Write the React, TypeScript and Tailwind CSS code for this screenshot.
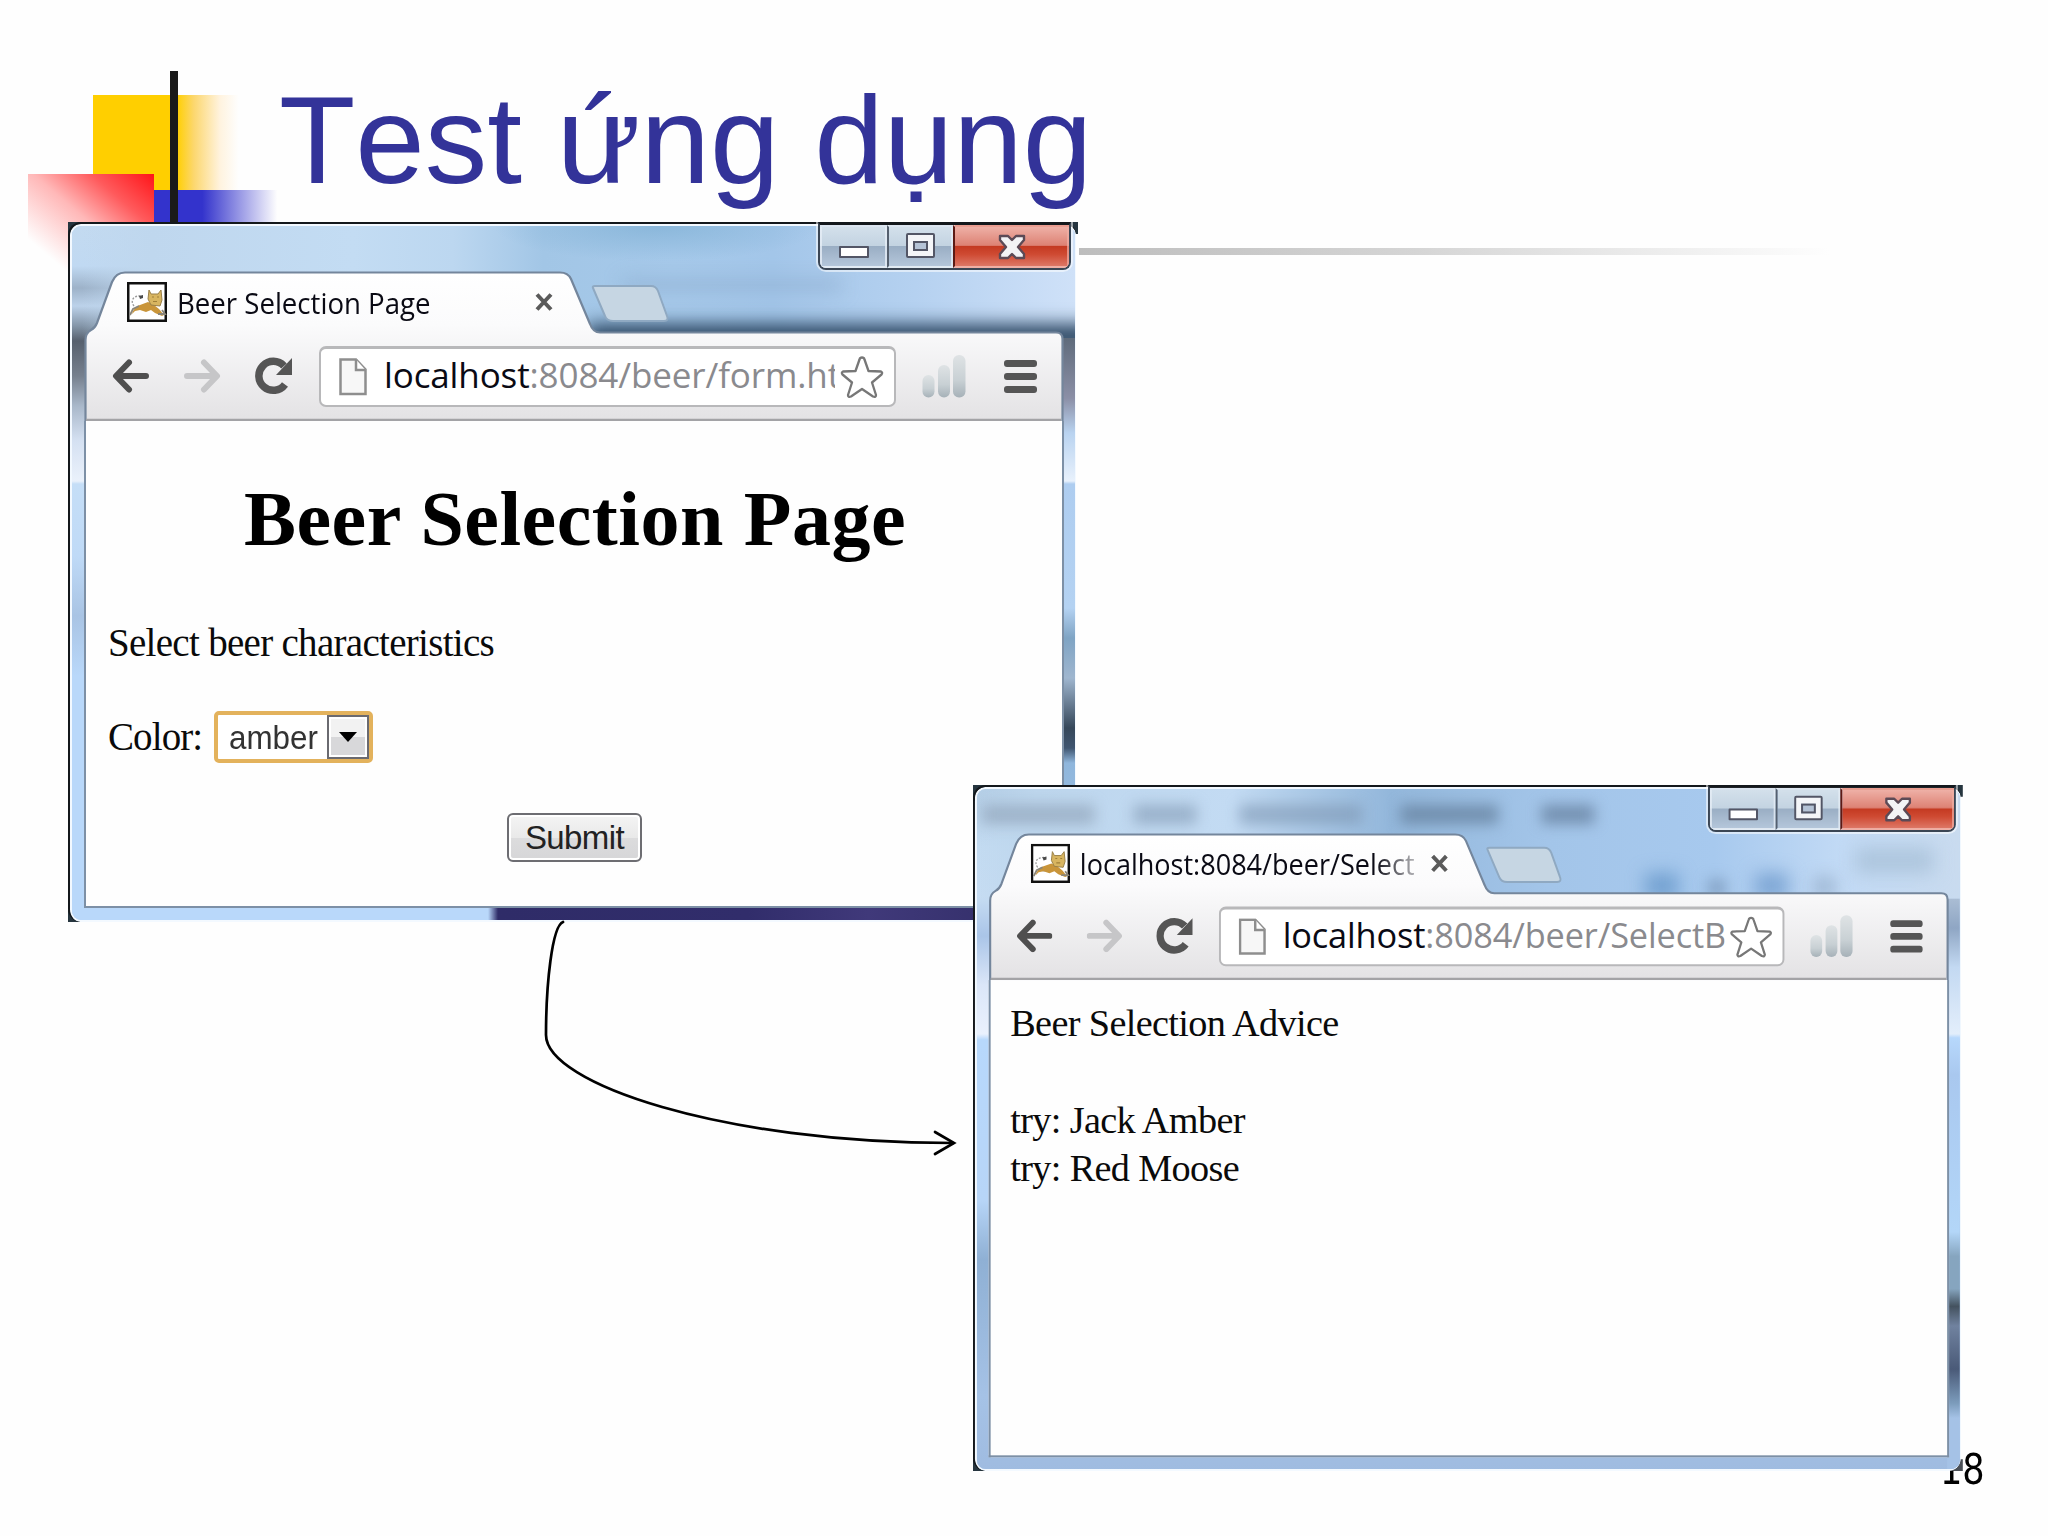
import type { ReactNode } from "react";
import clsx from "clsx";

function TomcatIcon() {
  return (
    <svg viewBox="0 0 40 40" className="w-10 h-10 shrink-0">
      <rect x="1.25" y="1.25" width="37.5" height="37.5" fill="#fff" stroke="#111" strokeWidth="2.5" />
      <path d="M7 24c-4-5-1-11 8-10" fill="none" stroke="#9a9a9a" strokeWidth="1.3" strokeDasharray="2 1.5" />
      <path d="M12 14l4-1v3l-3 1zM12 26l4-1v3h-4z" fill="#4a4a4a" />
      <path d="M5 32c1-4 4-8 8-9l8-3 6 3 5 4c2 2 3 4 5 6l-2 1-7-3-4-3-5 2-6-2-5 1z" fill="#c9953a" />
      <path d="M22 8l2 4h7l3-4 1 10-2 6-9-1-3-6z" fill="#d8b560" stroke="#9a8048" strokeWidth="1" />
      <path d="M25 15h2M30 15h2M26 19.500h4" stroke="#a08038" strokeWidth="1.200" />
      <path d="M3 33l3-6 6-3M31 32h7l-3-4" fill="none" stroke="#8a8578" strokeWidth="1.800" />
    </svg>
  );
}

function WindowButtons() {
  return (
    <div className="relative flex h-[48px] w-[253px] overflow-hidden rounded-b-[8px] border-[2.5px] border-t-[3px] border-[#3b4654] border-t-[#14181c] shadow-[0_0_0_2px_rgba(255,255,255,0.55)]">
      <div className="flex w-[67px] items-end justify-center border-2 border-[#e6eef6]/80 bg-[linear-gradient(#d3e0eb_0%,#c3d3e1_48%,#9aaec4_50%,#b4c6da_100%)] pb-[8px]">
        <div className="h-[12px] w-[30px] rounded-[1px] border-[2.5px] border-[#535666] bg-white" />
      </div>
      <div className="flex w-[66px] items-end justify-center border-2 border-l-[2.5px] border-[#e6eef6]/80 border-l-[#55606f] bg-[linear-gradient(#d3e0eb_0%,#c3d3e1_48%,#9aaec4_50%,#b4c6da_100%)] pb-[8px]">
        <div className="flex h-[25px] w-[29px] items-center justify-center rounded-[2px] border-[2.5px] border-[#535666] bg-[#f4f5f8]">
          <div className="h-[10px] w-[15px] border-[2.5px] border-[#535666] bg-[#b5c3d6]" />
        </div>
      </div>
      <div className="flex flex-1 items-center justify-center border-2 border-l-[2.5px] border-[#f0b0a5]/70 border-l-[#5d1a14] bg-[linear-gradient(#eeb0a6_0%,#dd8274_47%,#c43a22_50%,#cf4a32_70%,#dd7766_100%)] pl-[2px]">
        <svg viewBox="0 0 28 26" className="h-[26px] w-[28px]">
          <path
            d="M2 2h8l4 4 4-4h8v4l-6 7 6 7v4h-8l-4-4-4 4H2v-4l6-7-6-7z"
            fill="#f3f3f5"
            stroke="#5c4a56"
            strokeWidth="2.400"
            strokeLinejoin="round"
          />
        </svg>
      </div>
    </div>
  );
}

function BackArrow({ className }: { className?: string }) {
  return (
    <svg viewBox="0 0 37 34" className={clsx("h-[34px] w-[37px] shrink-0", className)}>
      <path d="M17 3.500L4 17l13 13.500M5 17h29" fill="none" stroke="currentColor" strokeWidth="6" strokeLinecap="round" strokeLinejoin="round" />
    </svg>
  );
}

function ReloadIcon() {
  return (
    <svg viewBox="0 0 38 38" className="h-[38px] w-[38px] shrink-0 text-[#555]">
      <path d="M30 27.500A14.500 14.500 0 1 1 29 9" fill="none" stroke="currentColor" strokeWidth="7.500" />
      <path d="M37 1v17H21z" fill="currentColor" />
    </svg>
  );
}

function PageIcon() {
  return (
    <svg viewBox="0 0 28 38" className="h-[38px] w-[28px] shrink-0">
      <path d="M1.500 1.500H17l9.500 10V36H1.500z" fill="#f7f7f7" stroke="#8e8e8e" strokeWidth="2.500" />
      <path d="M17 1.500V12h9.500" fill="#fff" stroke="#8e8e8e" strokeWidth="2.500" />
    </svg>
  );
}

function StarIcon() {
  return (
    <svg viewBox="0 0 44 44" className="h-[44px] w-[44px] shrink-0">
      <path
        d="M22 2.500q2 0 2.500 2l4 11.500 12.500.5q2 1 .5 3L32 27.500l4 12.500q0 2.500-3 1.500L22 34l-11 7.500q-3 1-3-1.500l4-12.500L2.500 19.500q-1.500-2 .5-3L15.500 16l4-11.500q.5-2 2.500-2z"
        fill="#fff"
        stroke="#777"
        strokeWidth="2.300"
        strokeLinejoin="round"
      />
    </svg>
  );
}

function SignalIcon() {
  return (
    <svg viewBox="0 0 44 44" className="h-[44px] w-[44px] shrink-0">
      <defs>
        <linearGradient id="signal" x1="0" y1="0" x2="0" y2="1">
          <stop offset="0" stopColor="#dfe3e5" />
          <stop offset="0.6" stopColor="#c8d0d4" />
          <stop offset="1" stopColor="#a6b1b8" />
        </linearGradient>
      </defs>
      <rect x="0.500" y="21" width="12" height="22.500" rx="6" fill="url(#signal)" />
      <rect x="16" y="11" width="12" height="32.500" rx="6" fill="url(#signal)" />
      <rect x="31" y="1" width="12.500" height="42.500" rx="6" fill="url(#signal)" />
    </svg>
  );
}

function BrowserFrame() {
  return (
    <svg viewBox="0 0 1008 200" className="absolute left-0 top-0 h-[200px] w-[1008px]">
      <defs>
        <linearGradient id="chrome" gradientUnits="userSpaceOnUse" x1="0" y1="50" x2="0" y2="199">
          <stop offset="0" stopColor="#ffffff" />
          <stop offset="0.35" stopColor="#fbfbfc" />
          <stop offset="1" stopColor="#e3e2e4" />
        </linearGradient>
      </defs>
      <path
        d="M17.500 200V118Q17.500 111 23 108Q27 106 29 101L44 60Q48 50.500 57 50.500H492Q500 50.500 503 57L522 102Q525 110.500 532 110.500H988Q994.500 110.500 994.500 117V200Z"
        fill="url(#chrome)"
        stroke="#74869c"
        strokeWidth="2.200"
      />
      <path d="M525 66q-1-2 2-2h56q5 0 7 5l9 25q2 5-3 5h-51q-6 0-8-5z" fill="#c6d6e3" stroke="#8fa9c2" strokeWidth="2" />
      <path d="M18 198H993" stroke="#a3a3a6" strokeWidth="2.500" />
    </svg>
  );
}

type BrowserProps = {
  title: string;
  path: string;
  className: string;
  glass: ReactNode;
  children: ReactNode;
};

function Browser({ title, path, className, glass, children }: BrowserProps) {
  return (
    <div className={clsx("absolute h-[700px] w-[1008px]", className)}>
      {/* square dark corners behind the rounded glass */}
      <div className="absolute left-0 top-0 h-4 w-4 bg-[#26353f]" />
      <div className="absolute -right-[2px] top-0 h-3 w-4 bg-[#26353f]" />
      <div className="absolute bottom-0 left-0 h-3 w-3 bg-[#26353f]" />
      <div className="absolute -right-[2px] bottom-0 h-3 w-3 bg-[#4a4f56]" />
      <div className="absolute inset-0 overflow-hidden rounded-[13px] border-l-[2.5px] border-t-[2.5px] border-[#14181c]">
        <div className="absolute inset-0 overflow-hidden rounded-[11px] border-2 border-r border-[#f3f9ff] bg-[#b9d6f5]">{glass}</div>
      </div>
      <BrowserFrame />

      <div className="relative flex h-full flex-col">
        <div className="flex h-[50px] justify-end pr-[5px]">
          <WindowButtons />
        </div>

        {/* Tab */}
        <div className="flex h-[60px] items-center pl-[59px]">
          <TomcatIcon />
          <div className="ml-[10px] w-[342px] overflow-hidden [mask-image:linear-gradient(90deg,#000_88%,rgba(0,0,0,0.3)_100%)]">
            <div className="w-max origin-left scale-x-[0.92] whitespace-nowrap font-['Open_Sans',sans-serif] text-[30px] leading-[41px] text-[#0a0a14]">{title}</div>
          </div>
          <svg viewBox="0 0 20 20" className="ml-[15px] h-5 w-5 shrink-0">
            <path d="M3 2.500l14 15M17 2.500l-14 15" stroke="#5a5a5a" strokeWidth="4" />
          </svg>
        </div>

        {/* Toolbar */}
        <div className="flex h-[88px] items-center pl-[44px]">
          <BackArrow className="text-[#4f4f4f]" />
          <BackArrow className="ml-[35px] rotate-180 text-[#c6c6c8]" />
          <div className="ml-[34px] flex">
            <ReloadIcon />
          </div>
          <div className="ml-[26px] flex h-[61px] w-[577px] items-center rounded-[7px] border-2 border-t-[3px] border-[#b8b8ba] bg-white pl-[18px]">
            <PageIcon />
            <div className="mb-[3px] ml-[17px] w-[451px] overflow-hidden">
              <div className="w-max whitespace-nowrap font-['Open_Sans',sans-serif] text-[35px] leading-[50px] tracking-[-0.12px] text-[#8a8a8e]">
                <span className="text-[#0a0a14]">localhost</span>
                {path}
              </div>
            </div>
            <div className="ml-[5px] flex">
              <StarIcon />
            </div>
          </div>
          <div className="ml-[26px] flex">
            <SignalIcon />
          </div>
          <div className="ml-[38px] flex w-[33px] flex-col gap-[6px]">
            <div className="h-[7px] rounded-[3px] bg-[#555]" />
            <div className="h-[7px] rounded-[3px] bg-[#555]" />
            <div className="h-[7px] rounded-[3px] bg-[#555]" />
          </div>
        </div>

        {/* Page */}
        <div className="ml-[16px] mt-[1px] h-[487px] w-[980px] border-x-2 border-b-2 border-[#7d90a6] bg-[#fefefe] pl-[22px] font-['Liberation_Serif',serif] text-[39px] text-[#0a0a0a]">
          {children}
        </div>
      </div>
    </div>
  );
}

function FormGlass() {
  return (
    <>
      <div className="absolute inset-0 bg-[linear-gradient(#c3daf0_0px,#c0d9f2_40px,#9db2c9_62px,#bcd2ea_80px,#8395a8_100px,#56606e_115px,#76808e_150px,#a9b8ca_180px,#d5e1f2_215px,#eaf1fb_255px,#c5def7_258px,#bfdaf7_330px,#a9c4e4_390px,#b9d8fa_450px,#b9d8fa_700px)]" />
      <div className="absolute left-0 right-0 top-0 h-[112px] bg-[linear-gradient(90deg,rgba(191,215,238,0)_1%,#bfd7ee_8%,#c3dcf3_28%,#bcd7f0_38%,#a2c6e6_47%,#a6c9ea_60%,#a3c6e9_70%,#b5d1f0_84%,#cfe1f8_100%)]" />
      <div className="absolute left-[420px] top-0 h-[36px] w-[330px] bg-[radial-gradient(ellipse_at_top,rgba(127,176,212,0.7),rgba(127,176,212,0)_70%)]" />
      <div className="absolute left-[550px] top-[52px] h-[14px] w-[220px] bg-[#84a5c8]/45 blur-[9px]" />
      <div className="absolute left-[515px] right-[-20px] top-[98px] h-[26px] bg-[#2c4763] blur-[9px]" />
      {/* right edge */}
      <div className="absolute right-0 top-[112px] h-[590px] w-[13px] bg-[linear-gradient(#5f6b7b_0px,#8b8fa6_60px,#b9d3f0_95px,#e8f1fc_143px,#aecdf0_146px,#b4d2f2_270px,#7fa4c4_300px,#9fb6cf_340px,#35475a_390px,#3f5570_410px,#8fb6dc_425px,#a9cbec_590px)]" />
      <div className="absolute bottom-0 left-[416px] right-0 h-[12px] bg-[linear-gradient(90deg,rgba(47,43,106,0)_0px,#2f2c68_10px,#312d6b_260px,#40397a_380px,#2d2a62_590px)]" />
    </>
  );
}

function AdviceGlass() {
  return (
    <>
      <div className="absolute inset-0 bg-[linear-gradient(#b4cee6_0px,#c3dbf1_60px,#c6dcf2_110px,#aac5e8_150px,#dbe6f8_200px,#eaf1fd_250px,#b7d8fc_256px,#b7d5f7_420px,#8fb0d4_480px,#a5c2e6_620px,#9fbbe0_700px)]" />
      <div className="absolute left-0 right-0 top-0 h-[112px] bg-[linear-gradient(90deg,rgba(189,214,237,0)_0%,#bdd6ed_6%,#c3dbf3_26%,#93b7db_42%,#a3c5e9_58%,#a7c9ee_75%,#c2daf5_88%,#c9dbef_100%)]" />
      {/* menu bar of the application behind the window */}
      <div className="absolute left-[5px] top-[16px] h-[20px] w-[115px] bg-[#8b9db2]/60 blur-[7px]" />
      <div className="absolute left-[160px] top-[16px] h-[20px] w-[64px] bg-[#8198b2]/60 blur-[7px]" />
      <div className="absolute left-[268px] top-[16px] h-[20px] w-[125px] bg-[#7c94b0]/60 blur-[7px]" />
      <div className="absolute left-[432px] top-[16px] h-[20px] w-[100px] bg-[#66829f]/75 blur-[7px]" />
      <div className="absolute left-[576px] top-[16px] h-[20px] w-[54px] bg-[#66809f]/75 blur-[7px]" />
      <div className="absolute left-[682px] top-[86px] h-[26px] w-[34px] bg-[#5d90c4]/70 blur-[9px]" />
      <div className="absolute left-[746px] top-[92px] h-[18px] w-[18px] bg-[#7593b5]/70 blur-[7px]" />
      <div className="absolute left-[794px] top-[86px] h-[26px] w-[34px] bg-[#6593c8]/70 blur-[9px]" />
      <div className="absolute left-[854px] top-[90px] h-[20px] w-[22px] bg-[#93abc8]/70 blur-[8px]" />
      <div className="absolute left-[896px] top-[60px] h-[26px] w-[80px] bg-[#a8c0d8]/80 blur-[9px]" />
      {/* right edge */}
      <div className="absolute right-0 top-[112px] h-[590px] w-[13px] bg-[linear-gradient(#aabdd4_0px,#8fa6c4_30px,#c3d9f2_70px,#e3eefb_138px,#b7d8fc_142px,#a9c8ef_180px,#b3d6f8_340px,#86a5bf_365px,#86a5bf_398px,#44525f_416px,#70829f_436px,#4a5a78_480px,#7c9cbc_515px,#a5c2e6_530px)]" />
    </>
  );
}

export default function App() {
  return (
    <div className="relative h-[1536px] w-[2048px] overflow-hidden bg-[#fefefe]">
      {/* Slide ornament */}
      <div className="absolute left-[93px] top-[95px] h-[95px] w-[155px] bg-[linear-gradient(90deg,#ffcf00_0%,#ffcf00_54%,#fcd76e_65%,#fff3df_82%,#fefefe_94%)]" />
      <div className="absolute left-[154px] top-[190px] h-[80px] w-[134px] bg-[linear-gradient(90deg,#3333cc_0%,#3333cc_36%,#fefefe_92%)]" />
      <div className="absolute left-[28px] top-[174px] h-[108px] w-[126px] bg-[linear-gradient(to_bottom_left,#ff1418_0%,#ff5a5c_25%,#ffb8b8_48%,#fefefe_80%)]" />
      <div className="absolute left-[170px] top-[71px] h-[160px] w-[8px] bg-[#1a1a1a]" />
      <div className="absolute left-[1079px] top-[248px] h-[7px] w-[751px] bg-[linear-gradient(90deg,#bdbdbd,#d5d5d5_45%,#fefefe)]" />

      <h1 className="ml-[279px] mt-[68px] w-max whitespace-nowrap font-['Liberation_Sans',sans-serif] text-[125px] leading-[144px] text-[#333399] [font-kerning:none]">
        Test ứng dụng
      </h1>

      <div className="absolute left-[1940px] top-[1445px] origin-left scale-x-[0.93] font-['DejaVu_Sans_Condensed','DejaVu_Sans',sans-serif] text-[42px] leading-[50px] text-black">
        18
      </div>

      <Browser title="Beer Selection Page" path=":8084/beer/form.ht" className="left-[68px] top-[222px]" glass={<FormGlass />}>
        <h2 className="mr-[20px] mt-[59px] whitespace-nowrap text-center text-[78px] font-bold leading-[78px] tracking-[0.5px] text-black">Beer Selection Page</h2>
        <p className="mt-[61px] leading-[48px] tracking-[-0.7px]">Select beer characteristics</p>
        <div className="mt-[44px] flex h-[52px] items-center">
          <span className="leading-[48px] tracking-[-0.9px]">Color:</span>
          <div className="ml-[12px] flex h-[52px] w-[159px] items-center rounded-[5px] border-4 border-[#e3b25c] bg-white pl-[11px] font-['Liberation_Sans',sans-serif] text-[33px] leading-[44px] text-[#333]">
            <span className="mt-[1px] w-[98px] origin-left scale-x-[0.95]">amber</span>
            <span className="flex h-[44px] w-[42px] items-center justify-center border-[2.5px] border-[#6a6a70] bg-[linear-gradient(#f2f2f2_50%,#d8d8da_50%)] shadow-[inset_0_0_0_2px_#fff]">
              <svg viewBox="0 0 18 10" className="h-[10px] w-[18px]">
                <path d="M0 0h18L9 10z" fill="#000" />
              </svg>
            </span>
          </div>
        </div>
        <div className="mr-[21px] mt-[50px] flex justify-center">
          <button className="h-[49px] w-[135px] rounded-[6px] border-[2.5px] border-[#6d6d72] bg-[linear-gradient(#f4f4f4,#e9e9e9_50%,#dcdcdd_52%,#d6d6d8)] pt-[1px] font-['Liberation_Sans',sans-serif] text-[33px] leading-[42px] tracking-[-0.6px] text-[#222] shadow-[inset_0_0_0_2px_#fff]">
            Submit
          </button>
        </div>
      </Browser>

      {/* Arrow from the form to the answer */}
      <svg viewBox="0 0 440 250" className="absolute left-[530px] top-[915px] h-[250px] w-[440px]">
        <g fill="none" stroke="#000" strokeWidth="2.700" strokeLinecap="round">
          <path d="M33 7C22 11 16 70 16 120C16 168 190 228 423 228" />
          <path d="M405 217l19 11-19 11" />
        </g>
      </svg>

      <Browser
        title="localhost:8084/beer/Select"
        path=":8084/beer/SelectB"
        className="left-[973px] top-[785px] origin-top-left scale-[0.98]"
        glass={<AdviceGlass />}
      >
        <div className="-ml-[2px] pt-[19px] leading-[49.3px] tracking-[-0.65px]">
          <p>Beer Selection Advice</p>
          <br />
          <p>try: Jack Amber</p>
          <p>try: Red Moose</p>
        </div>
      </Browser>
    </div>
  );
}
